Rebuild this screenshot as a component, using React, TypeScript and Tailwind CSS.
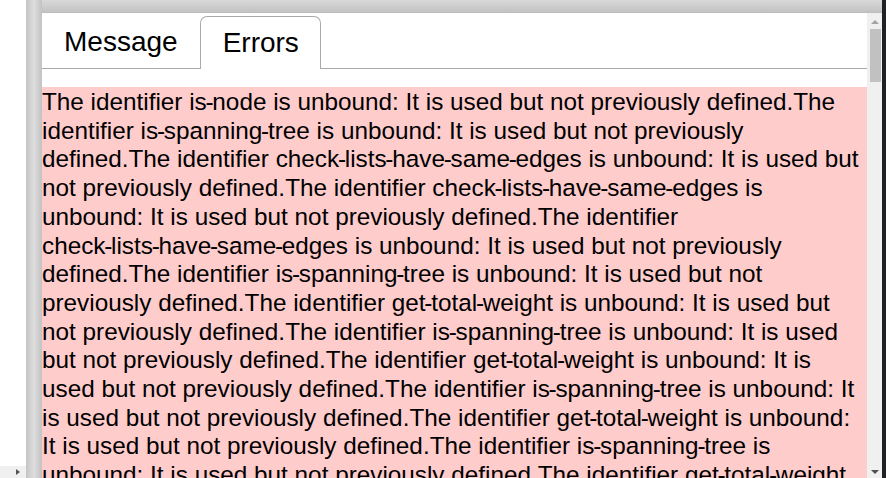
import React from 'react';

const ERRORS: [string, number][] = [
  ['is-node', 1],
  ['is-spanning-tree', 1],
  ['check-lists-have-same-edges', 3],
  ['is-spanning-tree', 1],
  ['get-total-weight', 1],
  ['is-spanning-tree', 1],
  ['get-total-weight', 1],
  ['is-spanning-tree', 1],
  ['get-total-weight', 1],
  ['is-spanning-tree', 1],
  ['get-total-weight', 1],
];

const Identifier: React.FC<{ name: string }> = ({ name }) => {
  const parts = name.split('-');
  return (
    <span className="whitespace-nowrap">
      {parts.map((p, i) => (
        <React.Fragment key={i}>
          {i > 0 && <span className="-mx-[1.25px]">-</span>}
          {p}
        </React.Fragment>
      ))}
    </span>
  );
};

const App: React.FC = () => {
  const items: string[] = [];
  ERRORS.forEach(([name, n]) => {
    for (let i = 0; i < n; i++) items.push(name);
  });

  return (
    <div className="w-[886px] h-[478px] flex overflow-hidden bg-white font-['Liberation_Sans',Arial,sans-serif] text-black">
      {/* Left pane */}
      <div className="w-[26px] h-full flex flex-col bg-white">
        <div className="flex-1" />
        <div className="h-[12px] bg-[#f0f0f0] flex items-center justify-end pr-[6px]">
          <div className="w-0 h-0 border-y-[3px] border-y-transparent border-l-[4px] border-l-[#555]" />
        </div>
      </div>

      {/* Splitter */}
      <div className="w-[16px] h-full bg-gradient-to-r from-[#c4c4c4] via-[#dedede] to-[#c2c2c2]" />

      {/* Main */}
      <div className="flex-1 h-full flex flex-col min-w-0">
        <div className="h-[13px] bg-gradient-to-b from-[#d9d9d9] to-[#c3c3c3] border-b border-[#bdbdbd]" />
        <div className="flex-1 flex min-h-0">
          <div className="flex-1 flex flex-col min-w-0 overflow-hidden">
            {/* Tabs */}
            <div className="pt-[3px] flex items-end border-b border-[#aaa] h-[56px]">
              <div className="px-[22px] h-[53px] flex items-center text-[28px] leading-none">Message</div>
              <div className="pl-[22px] pr-[21px] h-[53px] -mb-px flex items-center text-[28px] leading-none bg-white border border-b-0 border-[#aaa] rounded-t-[7px]">
                Errors
              </div>
            </div>
            {/* Error box */}
            <div className="mt-[18px] bg-[#ffcccc] text-[24.3px] leading-[28.7px] pt-[1px] flex-1">
              {items.map((name, i) => (
                <React.Fragment key={i}>
                  The identifier <Identifier name={name} /> is unbound: It is used but not previously defined.
                </React.Fragment>
              ))}
            </div>
          </div>

          {/* Scrollbar */}
          <div className="w-[15px] bg-[#f0f0f0] flex flex-col items-center">
            <div className="mt-[7px] w-0 h-0 border-x-[4px] border-x-transparent border-b-[4px] border-b-[#a3a3a3]" />
            <div className="mt-[5px] ml-[1px] w-[11px] h-[53px] bg-[#c1c1c1]" />
            <div className="flex-1" />
            <div className="mb-[4px] w-0 h-0 border-x-[4px] border-x-transparent border-t-[4px] border-t-[#505050]" />
          </div>
        </div>
      </div>

      {/* Dark edge */}
      <div className="w-[4px] h-full bg-[#1f2127]" />
    </div>
  );
};

export default App;
